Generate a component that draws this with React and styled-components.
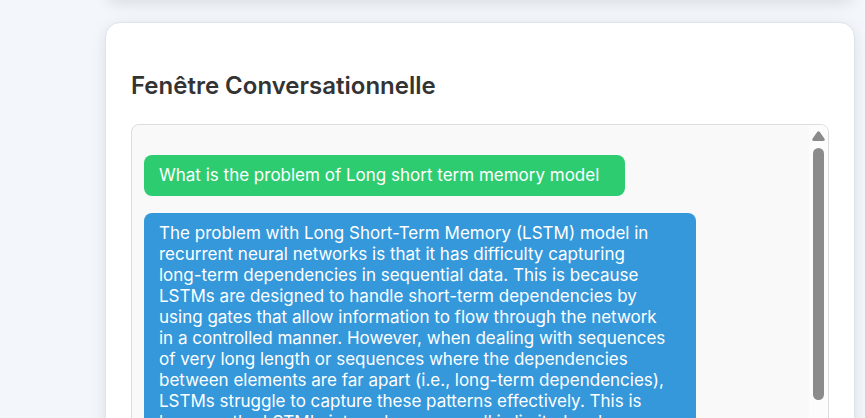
import React from "react";
import styled, { createGlobalStyle } from "styled-components";

const GlobalStyle = createGlobalStyle`
  * { box-sizing: border-box; }
  body {
    margin: 0;
    background: #f3f7fc;
    color: #333;
    font-family: Inter, "Liberation Sans", sans-serif;
  }
`;

const Page = styled.main`
  display: flex;
  flex-direction: column;
  gap: 22px;
  height: 100vh;
  overflow: hidden;
  padding: 0 10px 0 105px;
`;

const Card = styled.section`
  display: flex;
  flex-direction: column;
  flex: none;
  padding: 25px;
  background: #fff;
  border: 1px solid #dde4ee;
  border-radius: 15px;
  box-shadow: 0 4px 15px rgba(0, 0, 0, 0.1);
`;

const PreviousCard = styled(Card)`
  margin-top: -52px;
`;

const ChatCard = styled(Card)`
  min-height: 100vh;
`;

const Title = styled.h2`
  margin: 24px 0;
  font-size: 24px;
  line-height: 28px;
  font-weight: 600;
`;

const ChatWindow = styled.div`
  display: flex;
  flex: 1;
  background: #f9f9f9;
  border: 1px solid #ddd;
  border-radius: 8px;
  overflow: hidden;
`;

const Messages = styled.div`
  display: flex;
  flex: 1;
  flex-direction: column;
  align-items: flex-start;
  gap: 17px;
  padding: 30px 8px 30px 12px;
`;

const Message = styled.p`
  margin: 0;
  max-width: 84%;
  padding: 10px 26px 10px 15px;
  border-radius: 8px;
  background: ${({ $from }) => ($from === "user" ? "#2ecc71" : "#3498db")};
  color: #fff;
  font-size: 17px;
  line-height: 21px;
`;

const ScrollTrack = styled.div`
  display: flex;
  flex-direction: column;
  align-items: center;
  gap: 7px;
  width: 19px;
  padding-top: 6px;
  background: #fcfcfc;
`;

const ScrollThumb = styled.div`
  width: 11px;
  height: 252px;
  border-radius: 6px;
  background: #8b8b8b;
`;

const messages = [
  { from: "user", text: "What is the problem of Long short term memory model" },
  {
    from: "bot",
    text: "The problem with Long Short-Term Memory (LSTM) model in recurrent neural networks is that it has difficulty capturing long-term dependencies in sequential data. This is because LSTMs are designed to handle short-term dependencies by using gates that allow information to flow through the network in a controlled manner. However, when dealing with sequences of very long length or sequences where the dependencies between elements are far apart (i.e., long-term dependencies), LSTMs struggle to capture these patterns effectively. This is because the LSTM's internal memory cell is limited and",
  },
];

export default function App() {
  return (
    <>
      <GlobalStyle />
      <Page>
        <PreviousCard aria-hidden="true" />
        <ChatCard>
          <Title>Fenêtre Conversationnelle</Title>
          <ChatWindow>
            <Messages>
              {messages.map(({ from, text }) => (
                <Message key={text} $from={from}>
                  {text}
                </Message>
              ))}
            </Messages>
            <ScrollTrack aria-hidden="true">
              <svg width="13" height="10" viewBox="0 0 13 10">
                <path
                  d="M5.2 1Q6.5 -.5 7.8 1L12.4 7.4Q13.4 10 11.3 10H1.7Q-.4 10 .6 7.4Z"
                  fill="#8b8b8b"
                />
              </svg>
              <ScrollThumb />
            </ScrollTrack>
          </ChatWindow>
        </ChatCard>
      </Page>
    </>
  );
}
